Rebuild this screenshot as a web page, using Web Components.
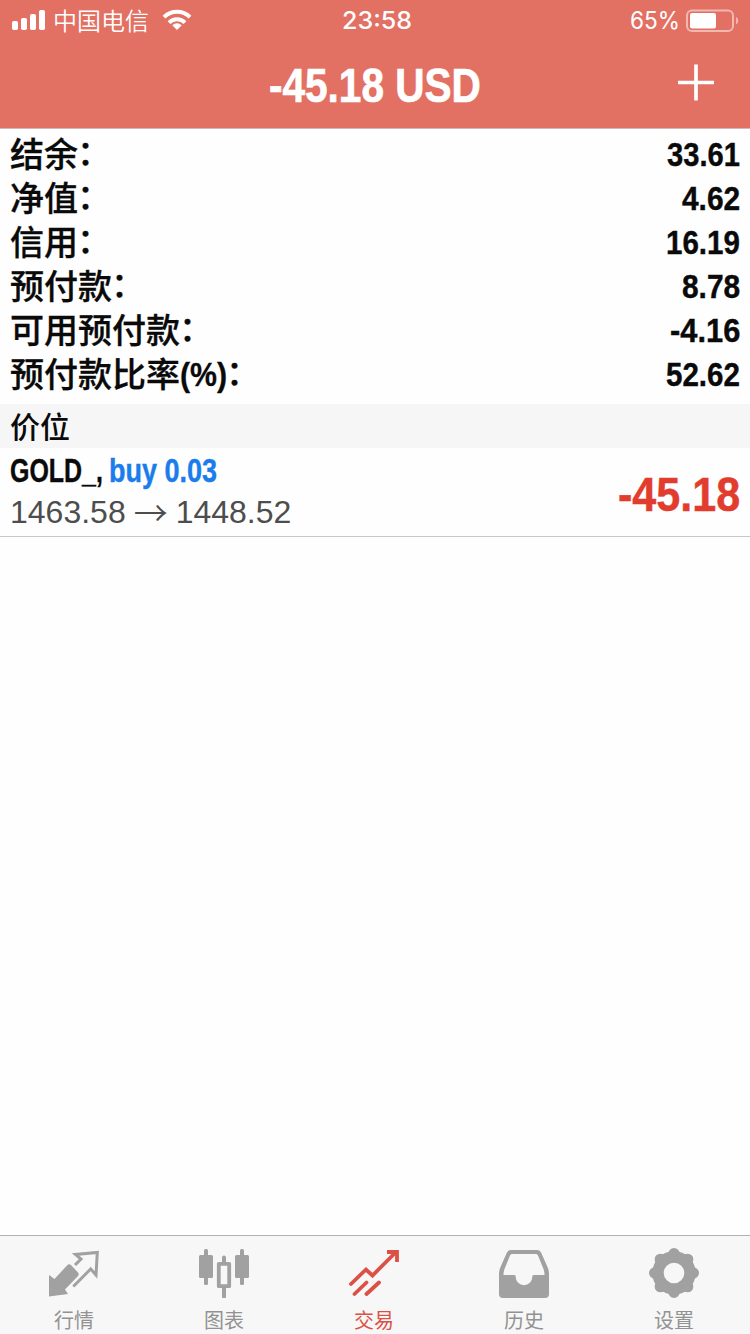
<!DOCTYPE html>
<html lang="zh-CN">
<head>
<meta charset="utf-8">
<title>交易</title>
<style>
    html, body {
        margin: 0;
        height: 100%;
        background: #fefefe;
        font-family: "Liberation Sans", "Noto Sans CJK SC", sans-serif;
    }
</style>
</head>
<body>
<trade-screen></trade-screen>

<script>
(function () {
    function define(name, html, setup) {
        let tmpl = document.createElement('template');
        tmpl.innerHTML = html;

        customElements.define(name, class extends HTMLElement {
            constructor() {
                super();
                this.attachShadow({ mode: 'open' }).appendChild(tmpl.content.cloneNode(true));
            }

            static get observedAttributes() {
                return ['width'];
            }

            connectedCallback() {
                if (setup) setup(this, this.shadowRoot);
            }

            attributeChangedCallback() {
                if (setup && this.isConnected) setup(this, this.shadowRoot);
            }
        });
    }

    define('fit-text', `
        <style>
            :host { display: inline-block; white-space: nowrap; flex: none; }
            span { display: inline-block; transform-origin: 0 50%; white-space: pre; }
        </style>
        <span><slot></slot></span>
    `, function (host, root) {
        let span = root.querySelector('span');
        let width = Number(host.getAttribute('width'));
        if (!width || !span.offsetWidth) return;
        host.style.width = width + 'px';
        span.style.transform = 'scaleX(' + width / span.offsetWidth + ')';
    });

    define('status-bar', `
        <style>
            :host {
                display: grid;
                grid-template: 40px / 1fr auto 1fr;
                height: 40px;
                padding: 0 11px 0 12px;
                color: #fff;
                font: 24px/40px Inter, "Noto Sans CJK SC", sans-serif;
            }
            div { display: flex; height: 40px; }
            .carrier { font: 350 24px/40px "Noto Sans CJK SC", sans-serif; margin: 0 13px 0 7px; }
            .time { font-weight: 500; line-height: 42px; margin-left: 3px; }
            .power { line-height: 42px; }
            .right { justify-content: flex-end; }
            .battery { margin-left: 5px; }
            svg { display: block; flex: none; }
        </style>
        <div>
            <svg width="34" height="40" fill="#fff">
                <rect x="0" y="21" width="6" height="9" rx="1.8"/>
                <rect x="9" y="18" width="6" height="12" rx="1.8"/>
                <rect x="18" y="14" width="6" height="16" rx="1.8"/>
                <rect x="27" y="10" width="6" height="20" rx="1.8"/>
            </svg>
            <fit-text class="carrier" width="96">中国电信</fit-text>
            <svg width="30" height="40" fill="none" stroke="#fff" stroke-width="4">
                <path d="M2 17.2a18.5 18.5 0 0 1 26 0"/>
                <path d="M7 22.6a11.4 11.4 0 0 1 16 0"/>
                <path d="M15 30l-4.7-4.7a6.7 6.7 0 0 1 9.4 0z" fill="#fff" stroke="none"/>
            </svg>
        </div>
        <fit-text class="time" width="70">23:58</fit-text>
        <div class="right">
            <fit-text class="power" width="50">65%</fit-text>
            <svg class="battery" width="54" height="40">
                <rect x="2" y="10.5" width="46" height="20.5" rx="5" fill="none" stroke="#fff" stroke-opacity=".5" stroke-width="2"/>
                <rect x="5" y="13" width="26" height="15.5" rx="2" fill="#fff"/>
                <path d="M51 17c3 1.500 3 6 0 7.500z" fill="#fff" fill-opacity=".5"/>
            </svg>
        </div>
    `);

    define('nav-bar', `
        <style>
            :host {
                display: grid;
                grid-template-columns: 1fr auto 1fr;
                height: 88px;
                color: #fff;
                font: bold 48px/92px "Liberation Sans", sans-serif;
                -webkit-text-stroke: .7px;
            }
            svg { display: block; grid-column: 3; justify-self: end; margin: 24px 36px 0 0; }
            fit-text { grid-column: 2; }
        </style>
        <fit-text width="212"><slot></slot></fit-text>
        <svg width="36" height="37" fill="none" stroke="#fff" stroke-width="3.7">
            <path d="M18 .5v36M0 18.500h36"/>
        </svg>
    `);

    define('summary-row', `
        <style>
            :host {
                display: flex;
                justify-content: space-between;
                height: 44px;
                padding: 0 10px;
                color: #0a0a0a;
                font: bold 33.500px/46px "Liberation Sans", sans-serif;
            }
            .label { display: flex; font: 500 34px/42px "Noto Sans CJK SC", sans-serif; -webkit-text-stroke: .3px; }
            .colon { line-height: 37px; margin-left: -1px; }
            .value { -webkit-text-stroke: .4px; }
        </style>
        <div class="label"><slot name="label"></slot><slot name="unit"></slot><span class="colon">：</span></div>
        <fit-text class="value"><slot></slot></fit-text>
    `, function (host, root) {
        root.querySelector('.value').setAttribute('width', host.getAttribute('value-width'));
    });

    define('section-title', `
        <style>
            :host {
                display: block;
                height: 44px;
                padding-left: 10px;
                background: #f6f6f6;
                color: #0a0a0a;
                font: 500 30px/42px "Noto Sans CJK SC", sans-serif;
            }
        </style>
        <slot></slot>
    `);

    define('position-row', `
        <style>
            :host {
                display: flex;
                justify-content: space-between;
                height: 88px;
                padding: 0 10px;
                border-bottom: 1px solid #c8c8c8;
            }
            .name { display: flex; height: 44px; font: bold 33px/45px "Liberation Sans", sans-serif; color: #0a0a0a; -webkit-text-stroke: .4px; }
            .side { color: #1b7ceb; margin-left: 6px; }
            .prices { height: 40px; font: 32px/38px "Liberation Sans", sans-serif; color: #4d4d4d; display: flex; align-items: center; }
            .arrow { font: 350 34px/38px "Noto Sans CJK SC", sans-serif; margin: 0 8px; }
            .profit { font: bold 48px/93px "Liberation Sans", sans-serif; color: #e13c2e; -webkit-text-stroke: .5px; }
        </style>
        <div>
            <div class="name">
                <fit-text width="93"><slot name="symbol"></slot></fit-text>
                <fit-text class="side" width="108"><slot name="side"></slot></fit-text>
            </div>
            <div class="prices">
                <slot name="open"></slot>
                <fit-text class="arrow" width="34">→</fit-text>
                <slot name="current"></slot>
            </div>
        </div>
        <fit-text class="profit" width="122"><slot name="profit"></slot></fit-text>
    `);

    define('tab-item', `
        <style>
            :host {
                display: flex;
                flex-direction: column;
                align-items: center;
                flex: 1;
                padding: 12px 2px 0 0;
                color: #929292;
                --icon: #a1a1a1;
                font: 20px/28px "Noto Sans CJK SC", sans-serif;
            }
            :host([active]) { color: #dc5146; --icon: #dc5146; }
            .icon { height: 50px; margin-bottom: 8px; color: var(--icon); }
        </style>
        <div class="icon"><slot name="icon"></slot></div>
        <div><slot></slot></div>
    `);

    define('tab-bar', `
        <style>
            :host {
                display: flex;
                height: 98px;
                background: #f7f7f7;
                border-top: 1px solid #b2b2b2;
            }
            svg { display: block; }
        </style>
        <tab-item>
            <svg slot="icon" width="50" height="50">
                <path fill="currentColor" d="M0 27L5.500 31L18 17.500Q20 15.500 22 17L29 24.500Q30.500 26.500 29 28L16 41.500L19 46L0 48.500z"/>
                <path fill="none" stroke="currentColor" stroke-width="3" d="M24.300 38.500L41.700 21L47 27L48.300 4.500L26.500 6.500L32 11L26 17"/>
            </svg>
            行情
        </tab-item>
        <tab-item>
            <svg slot="icon" width="50" height="50" fill="currentColor">
                <rect x="0" y="7" width="14" height="23" rx="1.500"/>
                <rect x="5" y="1" width="4" height="36" rx="1.500"/>
                <rect x="36" y="7" width="14" height="23" rx="1.500"/>
                <rect x="41" y="1" width="4" height="36" rx="1.500"/>
                <rect x="19.800" y="15.800" width="10.400" height="22.400" fill="none" stroke="currentColor" stroke-width="3.800" stroke-linejoin="round"/>
                <path d="M23 15V9.500a2 2 0 0 1 4 0V15zM23 39v9.500a2 2 0 0 0 4 0V39z"/>
            </svg>
            图表
        </tab-item>
        <tab-item active>
            <svg slot="icon" width="50" height="50" fill="none" stroke="currentColor" stroke-width="3.800" stroke-linecap="round">
                <path d="M2 36L17 21.500L23.500 27.500L46 5M5.500 46L17.500 34.500M17.500 46L30 34.500"/>
                <path stroke-linecap="butt" d="M38 4H48V14"/>
            </svg>
            交易
        </tab-item>
        <tab-item>
            <svg slot="icon" width="50" height="50" fill="currentColor">
                <path fill-rule="evenodd" d="M12 2H38Q41 2 42.300 5L48.500 19Q50 22 50 26V46Q50 50 46 50H4Q0 50 0 46V26Q0 22 1.500 19L7.700 5Q9 2 12 2zM13 6Q11.500 6 11 7.500L5.500 21Q4.500 24 4.500 27H15.500Q16.700 27 16.700 29A8.300 8.300 0 0 0 33.300 29Q33.300 27 34.500 27H45.500Q45.500 24 44.500 21L39 7.500Q38.500 6 37 6z"/>
            </svg>
            历史
        </tab-item>
        <tab-item>
            <svg slot="icon" width="50" height="50" fill="none" stroke="currentColor">
                <circle cx="25" cy="25" r="16" stroke-width="11.400"/>
                <path stroke-width="11.500" stroke-linecap="round" d="M25 5.750V8M25 42V44.250M5.750 25H8M42 25H44.250M11.400 11.400L13 13M37 37L38.600 38.600M11.400 38.600L13 37M37 13L38.600 11.400"/>
            </svg>
            设置
        </tab-item>
    `);

    define('trade-screen', `
        <style>
            :host { display: flex; flex-direction: column; height: 1334px; width: 750px; overflow: hidden; }
            header { background: #e27063; border-bottom: 1px solid #cdbab8; }
            section { padding: 3px 0 8px; }
            main { flex: 1; }
            .unit { font: bold 33.500px/46px "Liberation Sans", sans-serif; }
        </style>
        <header>
            <status-bar></status-bar>
            <nav-bar>-45.18 USD</nav-bar>
        </header>
        <main>
            <section>
                <summary-row value-width="73"><span slot="label">结余</span>33.61</summary-row>
                <summary-row value-width="58"><span slot="label">净值</span>4.62</summary-row>
                <summary-row value-width="74"><span slot="label">信用</span>16.19</summary-row>
                <summary-row value-width="58"><span slot="label">预付款</span>8.78</summary-row>
                <summary-row value-width="70"><span slot="label">可用预付款</span>-4.16</summary-row>
                <summary-row value-width="74"><span slot="label">预付款比率</span><fit-text slot="unit" class="unit" width="47">(%)</fit-text>52.62</summary-row>
            </section>
            <section-title>价位</section-title>
            <position-row>
                <span slot="symbol">GOLD_,</span>
                <span slot="side">buy 0.03</span>
                <span slot="open">1463.58</span>
                <span slot="current">1448.52</span>
                <span slot="profit">-45.18</span>
            </position-row>
        </main>
        <tab-bar></tab-bar>
    `);
})();
</script>
</body>
</html>
